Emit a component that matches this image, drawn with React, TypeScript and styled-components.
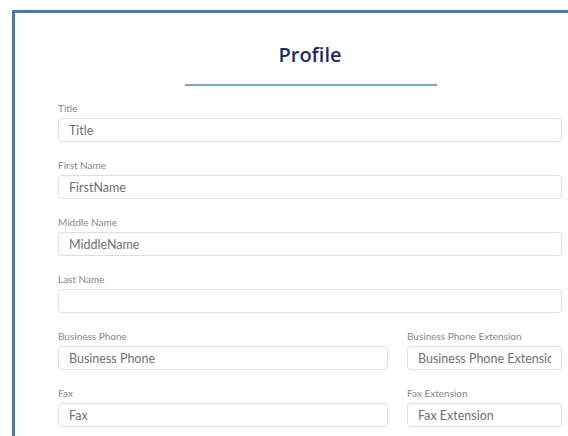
import styled, { createGlobalStyle } from "styled-components";

const GlobalStyle = createGlobalStyle`
  html, body {
    margin: 0;
    padding: 0;
    background: #ffffff;
    overflow: hidden;
  }
  body {
    font-family: "Lato", "Liberation Sans", sans-serif;
  }
  * {
    box-sizing: border-box;
  }
`;

type Field = {
  label: string;
  placeholder: string;
};

const singleFields: Field[] = [
  { label: "Title", placeholder: "Title" },
  { label: "First Name", placeholder: "FirstName" },
  { label: "Middle Name", placeholder: "MiddleName" },
  { label: "Last Name", placeholder: "" },
];

const pairedFields: Field[][] = [
  [
    { label: "Business Phone", placeholder: "Business Phone" },
    { label: "Business Phone Extension", placeholder: "Business Phone Extension" },
  ],
  [
    { label: "Fax", placeholder: "Fax" },
    { label: "Fax Extension", placeholder: "Fax Extension" },
  ],
];

function FormField({ label, placeholder }: Field) {
  return (
    <Group>
      <Label>{label}</Label>
      <Input placeholder={placeholder} />
    </Group>
  );
}

export default function App() {
  return (
    <>
      <GlobalStyle />
      <Card>
        <Heading>Profile</Heading>
        <Divider />
        <Form onSubmit={(e) => e.preventDefault()}>
          {singleFields.map((f) => (
            <FormField key={f.label} {...f} />
          ))}
          {pairedFields.map((pair) => (
            <Row key={pair[0].label}>
              {pair.map((f) => (
                <FormField key={f.label} {...f} />
              ))}
            </Row>
          ))}
        </Form>
      </Card>
    </>
  );
}

// open-ended panel: only the top and left edges are framed
const Card = styled.div`
  margin: 10px 0 0 12px;
  height: 426px;
  overflow: hidden;
  border-top: 3px solid #4a76a8;
  border-left: 3px solid #4a76a8;
  padding: 0 6px 0 43px;
`;

const Heading = styled.h1`
  margin: 28px 0 0;
  width: 504px;
  text-align: center;
  font-family: "Open Sans", "Liberation Sans", sans-serif;
  font-size: 20px;
  font-weight: 600;
  line-height: 28px;
  color: #1c2f5e;
`;

const Divider = styled.div`
  width: 252px;
  height: 2px;
  margin: 15px 0 0 127px;
  background: #7ea3cb;
`;

const Form = styled.form`
  width: 504px;
  margin-top: 15px;
  display: flex;
  flex-direction: column;
  gap: 16px;
`;

const Row = styled.div`
  display: grid;
  grid-template-columns: 330px 155px;
  column-gap: 19px;
`;

const Group = styled.div`
  display: flex;
  flex-direction: column;
  gap: 3px;
`;

const Label = styled.label`
  font-size: 10px;
  line-height: 14px;
  color: #868686;
  white-space: nowrap;
`;

const Input = styled.input`
  width: 100%;
  height: 24px;
  padding: 0 10px;
  border: 1px solid #dedede;
  border-radius: 4px;
  background: #ffffff;
  font-family: "Lato", "Liberation Sans", sans-serif;
  font-size: 12.5px;
  color: #555555;
  outline: none;
  &::placeholder {
    color: #707070;
  }
`;
